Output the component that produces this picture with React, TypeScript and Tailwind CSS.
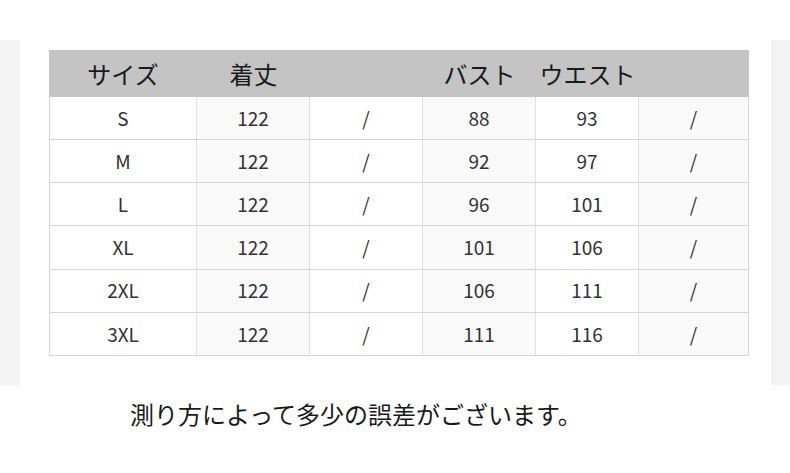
import React from "react";

const rows = [
  ["S", "122", "/", "88", "93", "/"],
  ["M", "122", "/", "92", "97", "/"],
  ["L", "122", "/", "96", "101", "/"],
  ["XL", "122", "/", "101", "106", "/"],
  ["2XL", "122", "/", "106", "111", "/"],
  ["3XL", "122", "/", "111", "116", "/"],
];

const headers = ["サイズ", "着丈", "", "バスト", "ウエスト", ""];

const headCols = "grid grid-cols-[148px_113px_113px_113px_103px_110px]";
const bodyCols = "grid grid-cols-[147px_113px_113px_113px_103px_109px]";

export default function App() {
  return (
    <div
      className="w-[790px] h-[473px] bg-white overflow-hidden"
      style={{ fontFamily: '"Noto Sans CJK JP", "Noto Sans", sans-serif' }}
    >
      <div className="flex items-start pt-[40px]">
        <div className="w-[20px] h-[345px] bg-[#f3f3f3]" />

        <div className="ml-[29px] mt-[10px] w-[700px]">
          <div className={`${headCols} h-[47px] bg-[#c4c4c4] text-[24px] text-[#1a1a1a]`}>
            {headers.map((h, i) => (
              <div key={i} className="flex items-center justify-center">
                {h}
              </div>
            ))}
          </div>

          <div className="border-l border-r border-[#d6d6d6]">
            {rows.map((r, ri) => (
              <div
                key={ri}
                className={`${bodyCols} h-[43.17px] border-b border-[#d6d6d6] text-[19px] text-[#333]`}
              >
                {r.map((c, ci) => (
                  <div
                    key={ci}
                    className={`flex items-center justify-center ${
                      ci < 5 ? "border-r border-[#e0e0e0]" : ""
                    } ${ci % 2 === 1 ? "bg-[#fafafa]" : "bg-white"}`}
                  >
                    {c}
                  </div>
                ))}
              </div>
            ))}
          </div>
        </div>

        <div className="ml-auto w-[19px] h-[345px] bg-[#f3f3f3]" />
      </div>

      <p className="pl-[130px] pt-[13px] text-[24px] text-[#1a1a1a] leading-[32px]">
        測り方によって多少の誤差がございます。
      </p>
    </div>
  );
}
